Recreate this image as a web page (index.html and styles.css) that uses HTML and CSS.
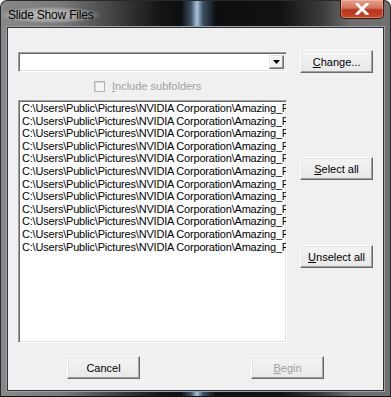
FILE: index.html
```html
<!DOCTYPE html>
<html>
<head>
<meta charset="utf-8">
<link rel="stylesheet" href="styles.css">
</head>
<body>
<div class="window">
  <div class="titlebar">
    <span class="title">Slide Show Files</span>
    <div class="close"><svg width="14" height="12" viewBox="0 0 14 12"><path d="M2 1 L12 11 M12 1 L2 11" stroke="#fff" stroke-width="3" stroke-linecap="square"/></svg></div>
  </div>
  <div class="client">
    <div class="row top">
      <div class="combo"><div class="arrow"><svg width="7" height="4" viewBox="0 0 7 4"><path d="M0 0 H7 L3.5 4 Z" fill="#000"/></svg></div></div>
      <button class="btn change"><u>C</u>hange...</button>
    </div>
    <div class="checkrow">
      <span class="checkbox"></span><span class="cblabel"><u>I</u>nclude subfolders</span>
    </div>
    <div class="row mid">
      <div class="list">
        <div class="item">C:\Users\Public\Pictures\NVIDIA Corporation\Amazing_Flowers</div>
        <div class="item">C:\Users\Public\Pictures\NVIDIA Corporation\Amazing_Flowers</div>
        <div class="item">C:\Users\Public\Pictures\NVIDIA Corporation\Amazing_Flowers</div>
        <div class="item">C:\Users\Public\Pictures\NVIDIA Corporation\Amazing_Flowers</div>
        <div class="item">C:\Users\Public\Pictures\NVIDIA Corporation\Amazing_Flowers</div>
        <div class="item">C:\Users\Public\Pictures\NVIDIA Corporation\Amazing_Flowers</div>
        <div class="item">C:\Users\Public\Pictures\NVIDIA Corporation\Amazing_Flowers</div>
        <div class="item">C:\Users\Public\Pictures\NVIDIA Corporation\Amazing_Flowers</div>
        <div class="item">C:\Users\Public\Pictures\NVIDIA Corporation\Amazing_Flowers</div>
        <div class="item">C:\Users\Public\Pictures\NVIDIA Corporation\Amazing_Flowers</div>
        <div class="item">C:\Users\Public\Pictures\NVIDIA Corporation\Amazing_Flowers</div>
        <div class="item">C:\Users\Public\Pictures\NVIDIA Corporation\Amazing_Flowers</div>
      </div>
      <div class="side">
        <button class="btn"><u>S</u>elect all</button>
        <button class="btn"><u>U</u>nselect all</button>
      </div>
    </div>
    <div class="row bottom">
      <button class="btn">Cancel</button>
      <button class="btn disabled"><u>B</u>egin</button>
    </div>
  </div>
</div>
</body>
</html>
```
FILE: styles.css
```css
* { box-sizing: border-box; }
html, body { margin: 0; padding: 0; background: #fff; }
body { width: 391px; height: 397px; overflow: hidden; font-family: "Liberation Sans", Arial, sans-serif; font-size: 11px; }

.window {
  width: 391px; height: 397px;
  display: flex; flex-direction: column;
  padding: 0 6px 7px 6px;
  border-radius: 7px 7px 0 0;
  background:
    linear-gradient(90deg, #888 0px, #7a7a7a 60px, #3a3a3a 120px, #121416 160px, #0c0e10 180px, #3d4f60 190px, #a8c4dc 196px, #3d4f60 202px, #0c0e10 215px, #101214 280px, #3a3a3a 320px, #6d6d6d 350px, #707070 391px);
  border: 1px solid #2a2a2a;
  border-bottom-color: #111;
}

.titlebar {
  height: 26px; flex: none;
  display: flex; align-items: flex-start; justify-content: space-between;
}
.title {
  margin-top: 6px; margin-left: -5px;
  font-family: "Liberation Sans", Arial, sans-serif; font-size: 12px; color: #000;
  letter-spacing: -0.2px;
  padding: 1px 6px;
  background: radial-gradient(ellipse at center, rgba(255,255,255,0.55) 0%, rgba(255,255,255,0.25) 55%, rgba(255,255,255,0) 75%);
}
.close {
  width: 44px; height: 19px; margin-top: -1px;
  border: 1px solid #3a1710; border-top: none;
  border-radius: 0 0 5px 5px;
  background: linear-gradient(#e3a18c 0%, #d0725a 45%, #b83419 55%, #c8472a 100%);
  box-shadow: inset 0 0 0 1px rgba(255,200,180,0.45);
  display: flex; align-items: center; justify-content: center;
}

.client {
  flex: 1;
  background: #f0f0f0;
  border: 1px solid #2e3338;
  box-shadow: 0 0 0 1px #9aa3ab;
  padding: 22px 10px 11px 10px;
  display: flex; flex-direction: column;
}

.row { display: flex; }
.top { align-items: center; gap: 13px; }

.combo {
  width: 270px; height: 20px;
  background: #fff;
  border: 1px solid;
  border-color: #a0a0a0 #fff #fff #a0a0a0;
  box-shadow: inset 1px 1px 0 #696969, inset -1px -1px 0 #e3e3e3;
  display: flex; justify-content: flex-end; padding: 2px;
}
.arrow {
  width: 15px; height: 14px;
  background: #f0f0f0;
  border: 1px solid; border-color: #e3e3e3 #696969 #696969 #e3e3e3;
  box-shadow: inset -1px -1px 0 #a0a0a0, inset 1px 1px 0 #fff;
  display: flex; align-items: center; justify-content: center;
}

.btn {
  width: 73px; height: 23px; padding: 0;
  font-family: "Liberation Sans", Arial, sans-serif; font-size: 11px; color: #000;
  background: linear-gradient(#f4f4f4, #e8e8e8);
  border: 1px solid; border-color: #fff #696969 #696969 #fff;
  box-shadow: inset -1px -1px 0 #a0a0a0, inset 1px 1px 0 #e3e3e3;
}
.btn.disabled { color: #a0a0a0; }

.checkrow {
  display: flex; align-items: center;
  margin: 6px 0 0 76px; height: 14px;
}
.checkbox {
  width: 11px; height: 11px; margin-right: 7px;
  border: 1px solid #b4b4b4;
  background: #f4f4f4;
  box-shadow: inset 1px 1px 0 #d8d8d8;
}
.cblabel { color: #a0a0a0; }

.mid { margin-top: 7px; gap: 13px; }
.list {
  width: 270px; height: 243px;
  background: #fff;
  border: 1px solid; border-color: #a0a0a0 #fff #fff #a0a0a0;
  box-shadow: inset 1px 1px 0 #696969, inset -1px -1px 0 #e3e3e3;
  padding: 1px 0 0 3px;
  overflow: hidden;
}
.item { height: 12.6px; line-height: 12.6px; white-space: nowrap; color: #000; letter-spacing: -0.2px; }

.side {
  display: flex; flex-direction: column; gap: 65px;
  padding-top: 57px;
}

.bottom { margin-top: 13px; padding-left: 49px; gap: 111px; }
```
